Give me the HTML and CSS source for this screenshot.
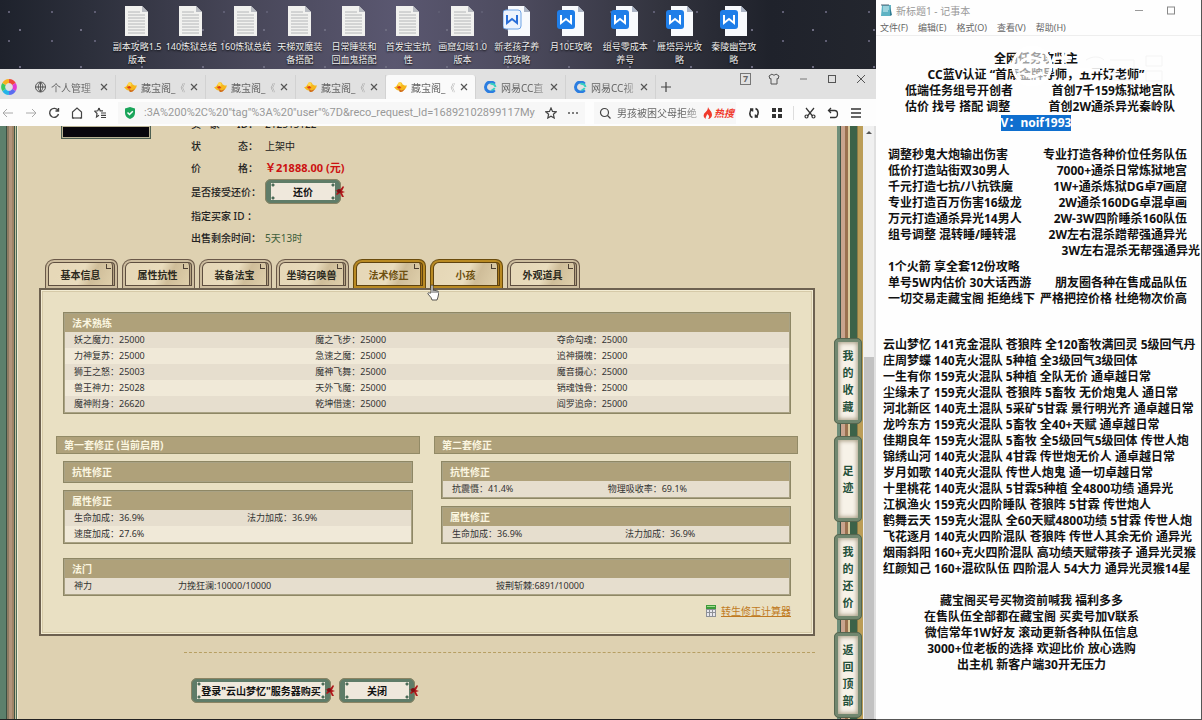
FILE: index.html
```
<!DOCTYPE html>
<html lang="zh-CN">
<head>
  <meta charset="UTF-8">
  <meta name="viewport" content="width=device-width, initial-scale=1.0">
  <title>藏宝阁</title>
  <link rel="stylesheet" href="styles.css">
</head>
<body>
  <!-- shared icons -->
  <svg class="defs" width="0" height="0">
    <symbol id="i-txt" viewBox="0 0 24 30">
      <path d="M0 0h17l6 6v24H0z" fill="#f1f1ef"/>
      <path d="M17 0v6h6z" fill="#b9bcc2"/>
      <path d="M3 6h12M3 9h17M3 12h17M3 15h17M3 18h17M3 21h17M3 24h17M3 27h17" stroke="#b4b6b8" stroke-width="1"/>
    </symbol>
    <symbol id="i-doc" viewBox="0 0 28 30">
      <path d="M5 0h16l6 6v24H5z" fill="#f8fafd"/>
      <path d="M21 0v6h6z" fill="#aab3c4"/>
      <rect x="0" y="4" width="18" height="19" rx="3" fill="#1f7ee8"/>
      <path d="M4 9v8l5-4 5 4V9" fill="none" stroke="#fff" stroke-width="2"/>
    </symbol>
    <symbol id="i-doc2" viewBox="0 0 28 30">
      <path d="M5 0h16l6 6v24H5z" fill="#f8fafd"/>
      <path d="M21 0v6h6z" fill="#aab3c4"/>
      <rect x="0" y="4" width="18" height="19" rx="3" fill="#eef4fd" stroke="#6fa4e6"/>
      <path d="M4 9v8l5-4 5 4V9" fill="none" stroke="#2b6fd8" stroke-width="2"/>
    </symbol>
    <symbol id="i-gold" viewBox="0 0 14 12">
      <path d="M0 6c3 0 3-2 4-3 1-3 5-3 5 0 2 1 3 2 5 1-1 4-3 6-7 6-3 0-5-1-7-4z" fill="#f6b81c"/>
      <path d="M5 8c2 2 5 2 7-1-1 3-3 5-6 4z" fill="#d2701a"/>
      <circle cx="6" cy="3" r="2" fill="#ffd84a"/>
      <path d="M3 6l3-1 2 2-3 1z" fill="#dd3a1c"/>
    </symbol>
    <symbol id="i-cc" viewBox="0 0 12 12">
      <path d="M10 3A5 5 0 1 0 10 9" fill="none" stroke="#2b7de0" stroke-width="3"/>
      <path d="M11 6A4 4 0 0 0 6 3" fill="none" stroke="#37cfc0" stroke-width="2"/>
      <path d="M7 9a3 3 0 0 0 3-2" fill="none" stroke="#37cfc0" stroke-width="2"/>
    </symbol>
    <symbol id="i-x" viewBox="0 0 8 8">
      <path d="M1 1l6 6M7 1l-6 6" stroke="#555" stroke-width="1.2"/>
    </symbol>
    <symbol id="i-knot" viewBox="0 0 12 14">
      <path d="M1 6l4 1 4-5 1 1-2 4 3 1-3 1 2 4-2 0-2-4-3 2-1-1 2-2z" fill="#b0171b"/>
      <circle cx="5" cy="7" r="2" fill="#7c1013"/>
    </symbol>
  </svg>

  <div class="screen">
    <div class="left">
      <ul class="desktop">
        <li><svg><use href="#i-txt"/></svg><span>副本攻略1.5<br>版本</span></li>
        <li><svg><use href="#i-txt"/></svg><span>140炼狱总结</span></li>
        <li><svg><use href="#i-txt"/></svg><span>160炼狱总结</span></li>
        <li><svg><use href="#i-txt"/></svg><span>天梯双魔装<br>备搭配</span></li>
        <li><svg><use href="#i-txt"/></svg><span>日常睡装和<br>回血鬼搭配</span></li>
        <li><svg><use href="#i-txt"/></svg><span>首发宝宝抗<br>性</span></li>
        <li><svg><use href="#i-txt"/></svg><span>画窟幻域1.0<br>版本</span></li>
        <li><svg class="wide"><use href="#i-doc2"/></svg><span>新老孩子养<br>成攻略</span></li>
        <li><svg class="wide"><use href="#i-doc"/></svg><span>月10E攻略</span></li>
        <li><svg class="wide"><use href="#i-doc"/></svg><span>组号零成本<br>养号</span></li>
        <li><svg class="wide"><use href="#i-doc"/></svg><span>雁塔异光攻<br>略</span></li>
        <li><svg class="wide"><use href="#i-doc"/></svg><span>秦陵幽宫攻<br>略</span></li>
      </ul>

      <div class="browser">
        <div class="tabstrip">
          <svg class="logo" viewBox="0 0 16 16" fill="none" stroke-width="4">
            <path d="M8 2a6 6 0 0 1 5 3" stroke="#f0463c"/>
            <path d="M13 5a6 6 0 0 1 0 6" stroke="#e23bd0"/>
            <path d="M13 11a6 6 0 0 1-5 3" stroke="#5b6cf0"/>
            <path d="M8 14a6 6 0 0 1-5-3" stroke="#25b4e8"/>
            <path d="M3 11a6 6 0 0 1 0-6" stroke="#3cc860"/>
            <path d="M3 5a6 6 0 0 1 5-3" stroke="#f7b21e"/>
          </svg>
          <div class="tab">
            <svg class="fav globe" viewBox="0 0 12 12" fill="none" stroke="#555"><circle cx="6" cy="6" r="5"/><path d="M1 6h10M6 1v10M6 1c-3 3-3 7 0 10M6 1c3 3 3 7 0 10"/></svg>
            <span>个人管理</span><svg class="x"><use href="#i-x"/></svg>
          </div>
          <div class="tab"><svg class="fav"><use href="#i-gold"/></svg><span>藏宝阁_《</span><svg class="x"><use href="#i-x"/></svg></div>
          <div class="tab"><svg class="fav"><use href="#i-gold"/></svg><span>藏宝阁_《</span><svg class="x"><use href="#i-x"/></svg></div>
          <div class="tab"><svg class="fav"><use href="#i-gold"/></svg><span>藏宝阁_《</span><svg class="x"><use href="#i-x"/></svg></div>
          <div class="tab active"><svg class="fav"><use href="#i-gold"/></svg><span>藏宝阁_《</span><svg class="x"><use href="#i-x"/></svg></div>
          <div class="tab"><svg class="fav"><use href="#i-cc"/></svg><span>网易CC直</span><svg class="x"><use href="#i-x"/></svg></div>
          <div class="tab"><svg class="fav"><use href="#i-cc"/></svg><span>网易CC视</span><svg class="x"><use href="#i-x"/></svg></div>
          <button class="newtab" aria-label="新标签页"><svg viewBox="0 0 10 10"><path d="M5 0v10M0 5h10" stroke="#444" stroke-width="1.2"/></svg></button>
          <div class="winctl">
            <span class="count">7</span>
            <svg viewBox="0 0 12 12" fill="none" stroke="#555"><path d="M4 1L1 3l1 3 1-.5V11h6V5.500l1 .5 1-3-3-2c-1 1.500-3 1.500-4 0z"/></svg>
            <svg viewBox="0 0 12 12"><path d="M3 6h7" stroke="#777"/></svg>
            <svg viewBox="0 0 12 12" fill="none" stroke="#555"><rect x="2.500" y="2.500" width="7" height="7"/></svg>
            <svg viewBox="0 0 12 12"><path d="M2 2l8 8M10 2l-8 8" stroke="#555"/></svg>
          </div>
        </div>

        <div class="toolbar">
          <div class="navbtns">
            <svg viewBox="0 0 12 12" fill="none" stroke="#aaa"><path d="M11 6H1M5 2L1 6l4 4"/></svg>
            <svg viewBox="0 0 12 12" fill="none" stroke="#aaa"><path d="M1 6h10M7 2l4 4-4 4"/></svg>
            <svg viewBox="0 0 12 12" fill="none" stroke="#444" stroke-width="1.400"><path d="M10 3.500A4.500 4.500 0 1 0 10.500 7M10.500 1v3h-3"/></svg>
            <svg viewBox="0 0 12 12" fill="none" stroke="#444" stroke-width="1.200"><path d="M3 11H1.500V5L6 1l4.500 4v6H9"/><path d="M1.500 11h9"/></svg>
            <svg viewBox="0 0 12 12" fill="none" stroke="#444" stroke-width="1.200"><path d="M5 1l1.200 2.800H9M5 1L3.800 3.800.8 4.200 3 6.500 2.500 10 5 8.300M7 6h5M7 8.300h5M7 10.500h5"/></svg>
          </div>
          <div class="address">
            <svg class="shield" viewBox="0 0 12 12"><path d="M6 0l5 1.500V6c0 3-2 5-5 6-3-1-5-3-5-6V1.500z" fill="#1aa55a"/><path d="M3.500 5.500l2 2 3.300-3.300" stroke="#fff" stroke-width="1.500" fill="none"/></svg>
            <input type="text" aria-label="地址栏" value=":3A%200%2C%20&quot;tag&quot;%3A%20&quot;user&quot;%7D&amp;reco_request_Id=16892102899117Myyl">
            <svg viewBox="0 0 12 12" fill="none" stroke="#444" stroke-width="1.200"><path d="M6 1l1.500 3.400 3.700.4-2.800 2.500.8 3.700L6 9.200 2.800 11l.8-3.700L.8 4.800l3.700-.4z"/></svg>
            <svg viewBox="0 0 12 12" fill="#555"><circle cx="2" cy="6" r="1"/><circle cx="6" cy="6" r="1"/><circle cx="10" cy="6" r="1"/></svg>
          </div>
          <div class="search">
            <svg viewBox="0 0 12 12" fill="none" stroke="#444" stroke-width="1.200"><circle cx="5.500" cy="5.500" r="4"/><path d="M8.500 8.500l3 3"/></svg>
            <input type="text" aria-label="搜索" value="男孩被困父母拒绝">
            <svg class="fire" viewBox="0 0 10 12"><path d="M5 0c1 3 4 4 4 8 0 2-2 4-4 4 2-2 1-4-1-5 0 2-2 3-1 5C1 11 0 9 1 7c1-2 4-3 4-7z" fill="#f0392b"/></svg>
            <span class="hot">热搜</span>
          </div>
          <div class="tools">
            <svg viewBox="0 0 12 12" fill="none" stroke="#333" stroke-width="1.600"><path d="M4.500 10.500C1 9 1 4 4 2M7.500 1.500c3.500 1.500 3.500 6.500.5 8.500M2 2h2.500v2.500M10 10H7.500V7.500"/></svg>
            <svg viewBox="0 0 12 12" fill="#333"><path d="M1 1h4v4H1zM7 1h4v4H7zM1 7h4v4H1zM7 7h4v4H7z"/></svg>
            <i class="sep"></i>
            <svg viewBox="0 0 12 12" fill="none" stroke="#333" stroke-width="1.200"><path d="M2 1l6.500 8M10 1L3.500 9"/><circle cx="2.500" cy="9.500" r="1.500"/><circle cx="9.500" cy="9.500" r="1.500"/></svg>
            <svg viewBox="0 0 12 12" fill="none" stroke="#333" stroke-width="1.300"><path d="M4 1L1.500 3.500 4 6M1.500 3.500H7.500c4 0 4 7 0 7H3"/></svg>
            <svg viewBox="0 0 12 12"><path d="M1 2h10M1 6h10M1 10h10" stroke="#333" stroke-width="1.300"/></svg>
          </div>
        </div>

        <div class="page">
          <div class="edge"></div>
          <main>
            <div class="summary">
              <div class="portrait"></div>
              <dl>
                <dt><span>卖</span><span>家</span><span></span><span>ID：</span></dt><dd>212515122</dd>
                <dt><span>状</span><span>态：</span></dt><dd>上架中</dd>
                <dt><span>价</span><span>格：</span></dt><dd class="price">￥21888.00 (元)</dd>
                <dt class="tall">是否接受还价：</dt><dd class="tall"><button class="plaque">还价<svg><use href="#i-knot"/></svg></button></dd>
                <dt>指定买家 ID ：</dt><dd></dd>
                <dt>出售剩余时间：</dt><dd class="time">5天13时</dd>
              </dl>
            </div>

            <nav class="sections">
              <button>基本信息</button>
              <button>属性抗性</button>
              <button>装备法宝</button>
              <button>坐骑召唤兽</button>
              <button class="on">法术修正</button>
              <button class="on">小孩</button>
              <button>外观道具</button>
              <svg class="hand" viewBox="0 0 12 17"><path d="M4 9V2c0-1.500 2-1.500 2 0v4l4.500 1c1 .3 1.500 1 1.300 2l-.8 4-1 3H5l-1-2.500L1 10c-.5-1 .8-1.800 1.600-1z" fill="#fff" stroke="#333" stroke-width=".8"/><path d="M6 6v3M8 6.500V9M10 7v2" stroke="#333" stroke-width=".8"/></svg>
            </nav>

            <section class="panel">
              <div class="box inset">
                <h3>法术熟练</h3>
                <table>
                  <tr><td>妖之魔力：25000</td><td>魔之飞步：25000</td><td>夺命勾魂：25000</td></tr>
                  <tr><td>力神复苏：25000</td><td>急速之魔：25000</td><td>追神摄魄：25000</td></tr>
                  <tr><td>狮王之怒：25003</td><td>魔神飞舞：25000</td><td>魔音摄心：25000</td></tr>
                  <tr><td>兽王神力：25028</td><td>天外飞魔：25000</td><td>销魂蚀骨：25000</td></tr>
                  <tr><td>魔神附身：26620</td><td>乾坤借速：25000</td><td>阎罗追命：25000</td></tr>
                </table>
              </div>

              <div class="sets">
                <div>
                  <h2>第一套修正 (当前启用)</h2>
                  <div class="box inset"><h3>抗性修正</h3></div>
                  <div class="box inset">
                    <h3>属性修正</h3>
                    <table>
                      <tr><td>生命加成：36.9%</td><td>法力加成：36.9%</td></tr>
                      <tr><td>速度加成：27.6%</td><td></td></tr>
                    </table>
                  </div>
                </div>
                <div>
                  <h2>第二套修正</h2>
                  <div class="box inset">
                    <h3>抗性修正</h3>
                    <table>
                      <tr><td class="c-resist">抗震慑：41.4%</td><td>物理吸收率：69.1%</td></tr>
                    </table>
                  </div>
                  <div class="box inset">
                    <h3>属性修正</h3>
                    <table>
                      <tr><td>生命加成：36.9%</td><td>法力加成：36.9%</td></tr>
                    </table>
                  </div>
                </div>
              </div>

              <div class="box inset">
                <h3>法门</h3>
                <table>
                  <tr><td class="c-name">神力</td><td class="c-skill">力挽狂澜:10000/10000</td><td>披荆斩棘:6891/10000</td></tr>
                </table>
              </div>

              <p class="calc">
                <svg viewBox="0 0 10 12"><path d="M0 0h10v12H0z" fill="#8d9096"/><path d="M0 0h10v4H0z" fill="#3d9a3a"/><path d="M1 1h8v1H1z" fill="#9fdc8c"/><path d="M1 5h2v2H1zM4 5h2v2H4zM7 5h2v2H7zM1 8h2v3H1zM4 8h2v3H4zM7 8h2v3H7z" fill="#e8e8ee"/></svg>
                <a href="#calc">转生修正计算器</a>
              </p>
            </section>

            <hr>
            <div class="actions">
              <button class="plaque long">登录"云山梦忆"服务器购买<svg><use href="#i-knot"/></svg></button>
              <button class="plaque">关闭<svg><use href="#i-knot"/></svg></button>
            </div>
          </main>
          <aside>
            <a href="#fav"><span>我的收藏</span></a>
            <a href="#history"><span>足迹</span></a>
            <a href="#offer"><span>我的还价</span></a>
            <a href="#top"><span>返回顶部</span></a>
          </aside>
          <div class="scroll"><i class="arrow"></i><i class="thumb"></i></div>
        </div>
      </div>
    </div>

    <div class="notepad">
      <header>
        <svg viewBox="0 0 12 13"><path d="M2 1h9l-1 11H1z" fill="#5fb3c4"/><path d="M3 3h6M3 5h6M3 7h5" stroke="#d8f2f6"/><path d="M2 0v2M4 0v2M6 0v2M8 0v2" stroke="#567"/><path d="M10 2l2 9-2 1z" fill="#2f7d94"/></svg>
        <span>新标题1 - 记事本</span>
        <svg class="min" viewBox="0 0 10 10"><path d="M1 5h8" stroke="#999"/></svg>
        <svg class="max" viewBox="0 0 10 10"><rect x="1.500" y="1.500" width="7" height="7" fill="none" stroke="#888"/></svg>
      </header>
      <div class="menu"><span>文件(F)</span><span>编辑(E)</span><span>格式(O)</span><span>查看(V)</span><span>帮助(H)</span></div>
      <div class="text">
        <div class="block intro">
          <p class="mid">全网任务攻坚主</p>
          <p class="mid">CC蓝V认证 “首席金牌导师，五开好老师”</p>
          <p><span>低端任务组号开创者</span><span>首创7千159炼狱地宫队</span></p>
          <p><span>估价 找号 搭配 调整</span><span>首创2W通杀异光秦岭队</span></p>
          <p class="mid"><mark>V：noif1993</mark></p>
          <svg class="watermark" viewBox="0 0 160 46">
            <circle cx="24" cy="24" r="19" fill="#fff" fill-opacity=".6" stroke="#fff" stroke-width="3"/>
            <path d="M12 22c4-8 20-8 24 0M14 30c6 6 14 6 20 0" fill="none" stroke="#fff" stroke-width="3"/>
            <path d="M46 16h18M55 8v14M70 28h22M98 32h14" fill="none" stroke="#fff" stroke-width="3"/>
            <path d="M78 18c6-4 14-4 18 0M102 18h24v12M138 14h16v10h-16zM138 29h16v10h-16zM106 28v10h20" fill="none" stroke="#f4f4f4"/>
          </svg>
        </div>
        <div class="block offers">
          <p><span>调整秒鬼大炮输出伤害</span><span>专业打造各种价位任务队伍</span></p>
          <p><span>低价打造站街双30男人</span><span>7000+通杀日常炼狱地宫</span></p>
          <p><span>千元打造七抗/八抗铁魔</span><span>1W+通杀炼狱DG卓7画窟</span></p>
          <p><span>专业打造百万伤害16级龙</span><span>2W通杀160DG卓混卓画</span></p>
          <p><span>万元打造通杀异光14男人</span><span>2W-3W四阶睡杀160队伍</span></p>
          <p><span>组号调整 混转睡/睡转混</span><span>2W左右混杀蹭帮强通异光</span></p>
          <p class="over"><span></span><span>3W左右混杀无帮强通异光</span></p>
          <p><span>1个火箭 享全套12份攻略</span></p>
          <p><span>单号5W内估价 30大话西游</span><span>朋友圈各种在售成品队伍</span></p>
          <p><span>一切交易走藏宝阁 拒绝线下</span><span>严格把控价格 杜绝物次价高</span></p>
        </div>
        <div class="block teams">
          <p>云山梦忆 141克金混队 苍狼阵 全120畜牧满回灵 5级回气丹</p>
          <p>庄周梦蝶 140克火混队 5种植 全3级回气3级回体</p>
          <p>一生有你 159克火混队 5种植 全队无价 通卓越日常</p>
          <p>尘缘未了 159克火混队 苍狼阵 5畜牧 无价炮鬼人 通日常</p>
          <p>河北新区 140克土混队 5采矿5甘霖 景行明光齐 通卓越日常</p>
          <p>龙吟东方 159克火混队 5畜牧 全40+天赋 通卓越日常</p>
          <p>佳期良年 159克火混队 5畜牧 全5级回气5级回体 传世人炮</p>
          <p>锦绣山河 140克火混队 4甘霖 传世炮无价人 通卓越日常</p>
          <p>岁月如歌 140克火混队 传世人炮鬼 通一切卓越日常</p>
          <p>十里桃花 140克火混队 5甘霖5种植 全4800功绩 通异光</p>
          <p>江枫渔火 159克火四阶睡队 苍狼阵 5甘霖 传世炮人</p>
          <p>鹤舞云天 159克火混队 全60天赋4800功绩 5甘霖 传世人炮</p>
          <p>飞花逐月 140克火四阶混队 苍狼阵 传世人其余无价 通异光</p>
          <p>烟雨斜阳 160+克火四阶混队 高功绩天赋带孩子 通异光灵猴</p>
          <p>红颜知己 160+混砍队伍 四阶混人 54大力 通异光灵猴14星</p>
        </div>
        <div class="block outro">
          <p>藏宝阁买号买物资前喊我 福利多多</p>
          <p>在售队伍全部都在藏宝阁 买卖号加V联系</p>
          <p>微信常年1W好友 滚动更新各种队伍信息</p>
          <p>3000+位老板的选择 欢迎比价 放心选购</p>
          <p>出主机 新客户端30开无压力</p>
        </div>
      </div>
    </div>
  </div>
</body>
</html>
```

FILE: styles.css
```
* {
  box-sizing: border-box;
}
body {
  margin: 0;
  font-family: "Noto Sans", "Noto Sans CJK SC", sans-serif;
  font-size: 10px;
  color: #222;
}
p, ul, dl, dd, h2, h3 {
  margin: 0;
  padding: 0;
}
button, input {
  font: inherit;
  border: none;
  background: none;
  padding: 0;
}
.defs {
  position: absolute;
}
.screen {
  display: flex;
  height: 100vh;
  min-height: 720px;
  background: #20222c;
  overflow: hidden;
}
.left {
  flex: 1;
  min-width: 0;
  display: flex;
  flex-direction: column;
}

/* desktop */
.desktop {
  list-style: none;
  height: 69px;
  flex: none;
  display: grid;
  grid-template-columns: repeat(12, minmax(0, 1fr));
  padding: 6px 115px 0 110px;
  background:
    radial-gradient(circle at 20px 30px, #6d6c80 1px, transparent 1px) 0 0 / 61px 37px,
    radial-gradient(circle at 9px 12px, #5e5d72 1px, transparent 1px) 0 0 / 43px 29px,
    linear-gradient(90deg, #1e222c, #2c2f3b 10%, #484759 28%, #5a5770 45%, #4e4c60 58%, #33343f 75%, #1f222b 88%, #23262e);
}
.desktop li {
  display: flex;
  flex-direction: column;
  align-items: center;
  gap: 4px;
  text-align: center;
  color: #eee;
  font-size: 9px;
  line-height: 13px;
  white-space: nowrap;
  text-shadow: 0 1px 2px #000;
}
.desktop svg {
  width: 24px;
  height: 30px;
}
.desktop .wide {
  width: 28px;
}

/* browser chrome */
.browser {
  flex: 1;
  min-height: 0;
  display: flex;
  flex-direction: column;
  background: #fff;
  border-bottom: 1px solid #222;
}
.tabstrip {
  height: 30px;
  flex: none;
  display: flex;
  background: #e1e1e1;
  padding-top: 6px;
  color: #666;
}
.logo {
  width: 16px;
  height: 16px;
  margin: 4px 9px 0 1px;
}
.tab {
  width: 90px;
  height: 24px;
  flex: none;
  display: flex;
  align-items: center;
  gap: 4px;
  padding: 0 7px 0 8px;
  border-right: 1px solid #d2d2d2;
}
.tab.active {
  background: #fafafa;
  border-radius: 3px 3px 0 0;
}
.tab span {
  flex: 1;
  white-space: nowrap;
  -webkit-mask-image: linear-gradient(90deg, #000 70%, rgba(0, 0, 0, .3));
}
.tab .fav {
  width: 13px;
  height: 12px;
  flex: none;
}
.tab .x {
  width: 8px;
  height: 8px;
  flex: none;
}
.newtab {
  padding: 0 5px;
}
.newtab svg {
  width: 10px;
  height: 10px;
  display: block;
}
.winctl {
  margin: -2px 9px 0 auto;
  height: 12px;
  display: flex;
  gap: 17px;
}
.winctl svg {
  width: 12px;
  height: 12px;
}
.count {
  width: 11px;
  height: 12px;
  border: 1px solid #777;
  font-size: 9px;
  line-height: 10px;
  text-align: center;
  font-weight: bold;
}
.toolbar {
  height: 27px;
  flex: none;
  display: flex;
  align-items: center;
  background: #fdfdfd;
}
.toolbar svg {
  width: 12px;
  height: 12px;
  flex: none;
}
.navbtns {
  display: flex;
  gap: 11px;
  padding: 0 12px 0 2px;
}
.address {
  flex: 1;
  min-width: 0;
  height: 22px;
  display: flex;
  align-items: center;
  gap: 10px;
  padding: 0 6px;
  background: #f7f7f7;
}
.address input {
  flex: 1;
  min-width: 0;
  font-family: Roboto, "Noto Sans", sans-serif;
  font-size: 11px;
  color: #999;
}
.address .shield {
  margin-right: -2px;
}
.search {
  width: 142px;
  height: 22px;
  margin-left: 9px;
  display: flex;
  align-items: center;
  gap: 6px;
  padding: 0 2px 0 5px;
  background: #f7f7f7;
}
.search input {
  flex: 1;
  min-width: 0;
  color: #666;
  -webkit-mask-image: linear-gradient(90deg, #000 80%, rgba(0, 0, 0, .3));
}
.search .fire {
  width: 10px;
  margin: 0 -5px 0 -3px;
}
.hot {
  color: #f0392b;
  font-weight: bold;
  font-style: italic;
}
.tools {
  display: flex;
  align-items: center;
  gap: 11px;
  padding: 0 14px 0 12px;
}
.sep {
  width: 1px;
  height: 14px;
  margin: 0 -1px;
  background: #ddd;
}

/* game page */
.page {
  flex: 1;
  min-height: 0;
  display: flex;
  overflow: hidden;
  background: #ded1b1;
}
.edge {
  width: 18px;
  background: linear-gradient(90deg, #5c806c 6px, #3a4f42 6px 7px, #8d7b62 7px 9px, #b2947a 9px 12px, #9f8467 12px 14px, #3f5644 14px 15px, #c9c4a0 15px 16px, #4f6c56 16px 17px, #f0ead2 17px);
}
main {
  flex: 1;
  min-width: 0;
}
.summary {
  display: flex;
  gap: 40px;
  padding-left: 43px;
}
.portrait {
  width: 90px;
  height: 13px;
  background: #08060c;
  border: 1px solid #4d5f52;
  border-top: none;
  box-shadow: inset 0 0 0 1px #b9b394;
}
/* the page is scrolled: the first row sits half under the toolbar */
dl {
  flex: 1;
  display: grid;
  grid-template-columns: 67px 1fr;
  column-gap: 7px;
  margin-top: -13px;
  line-height: 22px;
}
dt {
  display: flex;
  justify-content: space-between;
  white-space: nowrap;
  font-weight: 500;
}
dd.tall, dt.tall {
  height: 26px;
  line-height: 26px;
}
.time {
  color: #3f5f3a;
}
.price {
  color: #cc1111;
  font-weight: bold;
  font-size: 11px;
}
.plaque {
  position: relative;
  width: 76px;
  height: 25px;
  display: block;
  border: 4px solid #5f7c68;
  border-left-width: 6px;
  border-right-width: 6px;
  border-radius: 6px;
  outline: 1px solid #8b8463;
  outline-offset: -1px;
  background:
    radial-gradient(circle, #4b6b58 1px, transparent 2px) 0 0 / 4px 4px no-repeat,
    radial-gradient(circle, #4b6b58 1px, transparent 2px) 100% 0 / 4px 4px no-repeat,
    radial-gradient(circle, #4b6b58 1px, transparent 2px) 0 100% / 4px 4px no-repeat,
    radial-gradient(circle, #4b6b58 1px, transparent 2px) 100% 100% / 4px 4px no-repeat,
    #efe8dc;
  color: #111;
  font-weight: bold;
  line-height: 16px;
  white-space: nowrap;
}
.plaque.long {
  width: 140px;
}
.plaque svg {
  position: absolute;
  right: -11px;
  top: 1px;
  width: 12px;
  height: 14px;
}
.sections {
  position: relative;
  display: flex;
  gap: 4px;
  height: 29px;
  margin: 10px 0 0 27px;
}
.sections button {
  position: relative;
  width: 73px;
  padding-right: 2px;
  border: 1px solid #6a5848;
  border-bottom: none;
  border-radius: 9px 7px 0 0;
  box-shadow: inset 0 0 0 2px #cdbd9e, inset 0 0 0 3px #5e4e3f, inset -4px 0 0 0 #b3a181, inset -5px 0 0 0 #5e4e3f;
  background: linear-gradient(115deg, #e6d8b8 20%, #e9dcbd 50%, #cfbd99 65%, #e3d4b0);
  color: #2c2a20;
  font-weight: bold;
}
/* folded corner */
.sections button::after {
  content: "";
  position: absolute;
  right: 6px;
  top: 4px;
  width: 4px;
  height: 4px;
  border-left: 1px solid #4c3f33;
  border-bottom: 1px solid #4c3f33;
}
.sections .on {
  color: #6e5010;
  border-color: #6b4c0c;
  box-shadow: inset 0 0 0 2px #b98a23, inset 0 0 0 3px #5f4310, inset -4px 0 0 0 #a8781c, inset -5px 0 0 0 #5f4310;
}
.hand {
  position: absolute;
  left: 382px;
  top: 25px;
  width: 12px;
  height: 17px;
  z-index: 2;
}
.panel {
  margin: 0 19px 0 21px;
  padding: 22px 15px 15px;
  border: 2px solid #6d6150;
  box-shadow: inset 0 0 0 1px #f3ecd2, inset 0 0 0 2px #d6caa8;
  background: #e9e0c3;
}
.inset {
  margin: 0 7px;
}
.box {
  border: 2px solid #a9a284;
  outline: 1px solid #8e8765;
  outline-offset: -1px;
}
h2, h3 {
  font-size: 10px;
  font-weight: bold;
  color: #fbf6e0;
  background: #afa17a;
}
h3 {
  height: 18px;
  line-height: 18px;
  padding-left: 7px;
}
h2 {
  height: 18px;
  line-height: 16px;
  padding-left: 7px;
  border: 1px solid #928a66;
}
table {
  width: 100%;
  table-layout: fixed;
  border-collapse: collapse;
  font-size: 9px;
  color: #333;
}
td {
  height: 16px;
  line-height: 16px;
  padding: 0 0 0 9px;
  white-space: nowrap;
}
tr {
  background: #e6dece;
}
tr:nth-child(even) {
  background: #f0e9d8;
}
.c-resist {
  width: 45%;
}
.c-name {
  width: 104px;
}
.c-skill {
  width: 318px;
}
.sets {
  display: grid;
  grid-template-columns: 1fr 1fr;
  gap: 14px;
  margin: 22px 0 14px;
}
.sets .box {
  margin-top: 7px;
}
.calc {
  display: flex;
  justify-content: flex-end;
  align-items: center;
  gap: 5px;
  margin: 7px 7px 0;
  line-height: 16px;
}
.calc svg {
  width: 10px;
  height: 12px;
}
.calc a {
  color: #c07a22;
}
hr {
  margin: 16px 19px 25px 166px;
  border: none;
  border-top: 1px dashed #b79f63;
}
.actions {
  display: flex;
  gap: 8px;
  padding-left: 173px;
}

/* right rail */
aside {
  width: 29px;
  display: flex;
  flex-direction: column;
  justify-content: flex-end;
  gap: 12px;
  padding-bottom: 1px;
  background: linear-gradient(90deg, transparent 3px, #6f8f7a 3px 6px, #3f5446 6px 7px, #c9a48e 7px 11px, #9a7150 11px 14px, #d9c89a 14px 16px, #3c6248 16px 23px, #8a7a48 23px 24px, #bb9d57 24px);
}
aside a {
  height: 86px;
  margin-right: 1px;
  display: flex;
  align-items: center;
  justify-content: center;
  border: 4px solid #71876f;
  border-radius: 5px;
  outline: 1px solid #55664f;
  outline-offset: -1px;
  background: #f7f2e8;
  box-shadow: inset 0 0 4px 1px #a79c84;
  color: #24503a;
  font-size: 11px;
  font-weight: bold;
  line-height: 17px;
  text-decoration: none;
}
aside span {
  width: 11px;
  word-break: break-all;
}
.scroll {
  width: 13px;
  display: flex;
  flex-direction: column;
  align-items: center;
  background: #f0f0f0;
  border-right: 2px solid #e0e0e0;
}
.arrow {
  margin-top: 5px;
  border: 3px solid transparent;
  border-top: none;
  border-bottom: 3px solid #555;
}
.thumb {
  width: 10px;
  flex: 1;
  margin-top: 223px;
  background: #c2c2c2;
}

/* notepad */
.notepad {
  width: 326px;
  background: #fefefe;
  border-right: 1px solid #555;
  border-bottom: 1px solid #555;
}
.notepad header {
  height: 20px;
  display: flex;
  align-items: center;
  gap: 4px;
  padding: 0 25px 0 4px;
  color: #999;
}
.notepad header svg {
  width: 12px;
  height: 13px;
}
.notepad .min {
  margin-left: auto;
  width: 10px;
}
.notepad .max {
  margin-left: 18px;
  width: 10px;
}
.menu {
  display: flex;
  gap: 10px;
  height: 16px;
  line-height: 15px;
  padding-left: 4px;
  font-size: 9px;
  color: #666;
  border-bottom: 1px solid #eee;
}
.text {
  padding-top: 15px;
  font-size: 12px;
  font-weight: bold;
  line-height: 16px;
  color: #111;
  white-space: nowrap;
}
.block p {
  height: 16px;
}
.intro, .offers {
  position: relative;
}
.intro p, .offers p {
  display: flex;
  justify-content: space-between;
}
.intro {
  padding: 0 26px 0 29px;
}
.intro .mid {
  justify-content: center;
  padding-right: 8px;
}
mark {
  background: #0f6fcf;
  color: #fff;
}
.watermark {
  position: absolute;
  left: 132px;
  top: -9px;
  width: 160px;
  height: 46px;
}
.offers {
  padding: 0 14px 0 12px;
  margin-top: 16px;
}
.offers .over {
  margin-right: -13px;
}
.teams {
  padding-left: 7px;
  margin-top: 30px;
}
.outro {
  margin-top: 16px;
  padding-right: 14px;
  text-align: center;
}
```
